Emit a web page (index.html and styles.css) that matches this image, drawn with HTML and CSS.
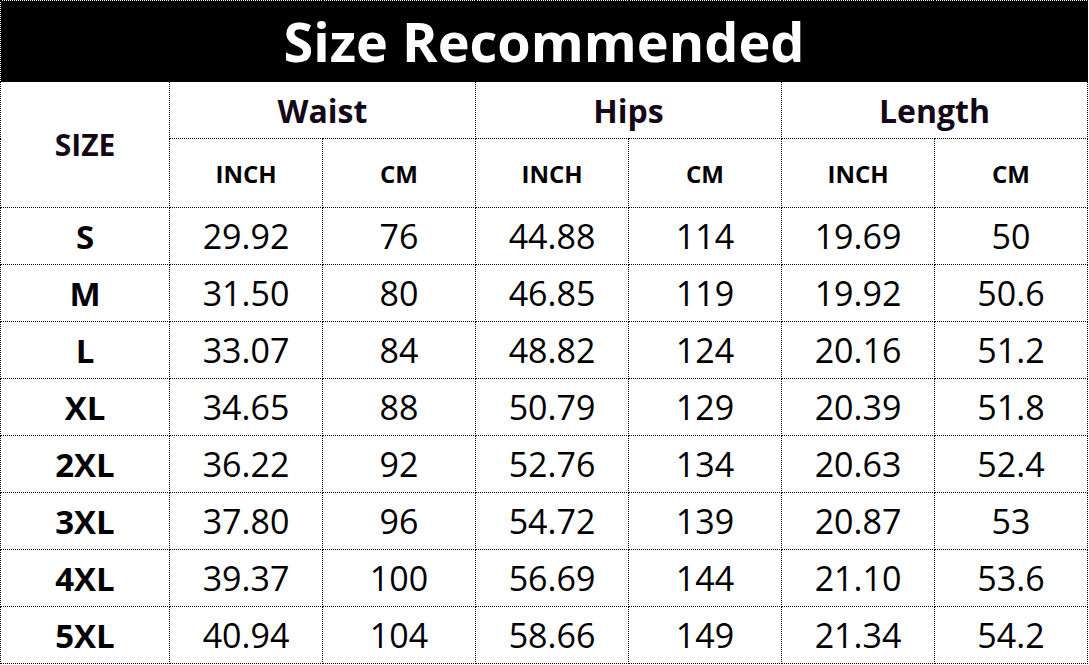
FILE: index.html
```html
<!DOCTYPE html>
<html>
<head>
<meta charset="utf-8">
<link rel="stylesheet" href="styles.css">
</head>
<body>
<table class="chart">
  <colgroup>
    <col class="c-size">
    <col class="c-val"><col class="c-val"><col class="c-val"><col class="c-val"><col class="c-val"><col class="c-val">
  </colgroup>
  <thead>
    <tr class="r-title"><th colspan="7" class="title">Size Recommended</th></tr>
    <tr class="r-group">
      <th rowspan="2" class="size-h">SIZE</th>
      <th colspan="2" class="group">Waist</th>
      <th colspan="2" class="group">Hips</th>
      <th colspan="2" class="group">Length</th>
    </tr>
    <tr class="r-unit">
      <th class="unit">INCH</th><th class="unit">CM</th>
      <th class="unit">INCH</th><th class="unit">CM</th>
      <th class="unit">INCH</th><th class="unit">CM</th>
    </tr>
  </thead>
  <tbody>
    <tr><th>S</th><td>29.92</td><td>76</td><td>44.88</td><td>114</td><td>19.69</td><td>50</td></tr>
    <tr><th>M</th><td>31.50</td><td>80</td><td>46.85</td><td>119</td><td>19.92</td><td>50.6</td></tr>
    <tr><th>L</th><td>33.07</td><td>84</td><td>48.82</td><td>124</td><td>20.16</td><td>51.2</td></tr>
    <tr><th>XL</th><td>34.65</td><td>88</td><td>50.79</td><td>129</td><td>20.39</td><td>51.8</td></tr>
    <tr><th>2XL</th><td>36.22</td><td>92</td><td>52.76</td><td>134</td><td>20.63</td><td>52.4</td></tr>
    <tr><th>3XL</th><td>37.80</td><td>96</td><td>54.72</td><td>139</td><td>20.87</td><td>53</td></tr>
    <tr><th>4XL</th><td>39.37</td><td>100</td><td>56.69</td><td>144</td><td>21.10</td><td>53.6</td></tr>
    <tr><th>5XL</th><td>40.94</td><td>104</td><td>58.66</td><td>149</td><td>21.34</td><td>54.2</td></tr>
  </tbody>
</table>
</body>
</html>
```
FILE: styles.css
```css
html, body {
  margin: 0;
  padding: 0;
  background: #fff;
}
.chart {
  border-collapse: collapse;
  table-layout: fixed;
  width: 1088px;
  font-family: "Open Sans", "Noto Sans", sans-serif;
  color: #000;
}
.c-size { width: 169px; }
.c-val { width: 153px; }
.chart th, .chart td {
  border: 1px dotted #000;
  padding: 0;
  text-align: center;
  vertical-align: middle;
}
.r-title { height: 81px; }
.title {
  background: #000;
  color: #fff;
  font-size: 54px;
  font-weight: 700;
  line-height: 1;
  padding-bottom: 9px;
}
.r-group { height: 57px; }
.r-unit { height: 69px; }
.group {
  font-size: 32px;
  font-weight: 700;
  color: #140818;
  padding-bottom: 3px;
}
.size-h {
  font-size: 30px;
  font-weight: 700;
  color: #140818;
}
.unit {
  font-size: 24px;
  font-weight: 700;
  padding-top: 1px;
}
tbody tr { height: 57px; }
tbody th {
  font-size: 33px;
  font-weight: 700;
}
tbody td {
  font-size: 34px;
  font-weight: 400;
}
```
